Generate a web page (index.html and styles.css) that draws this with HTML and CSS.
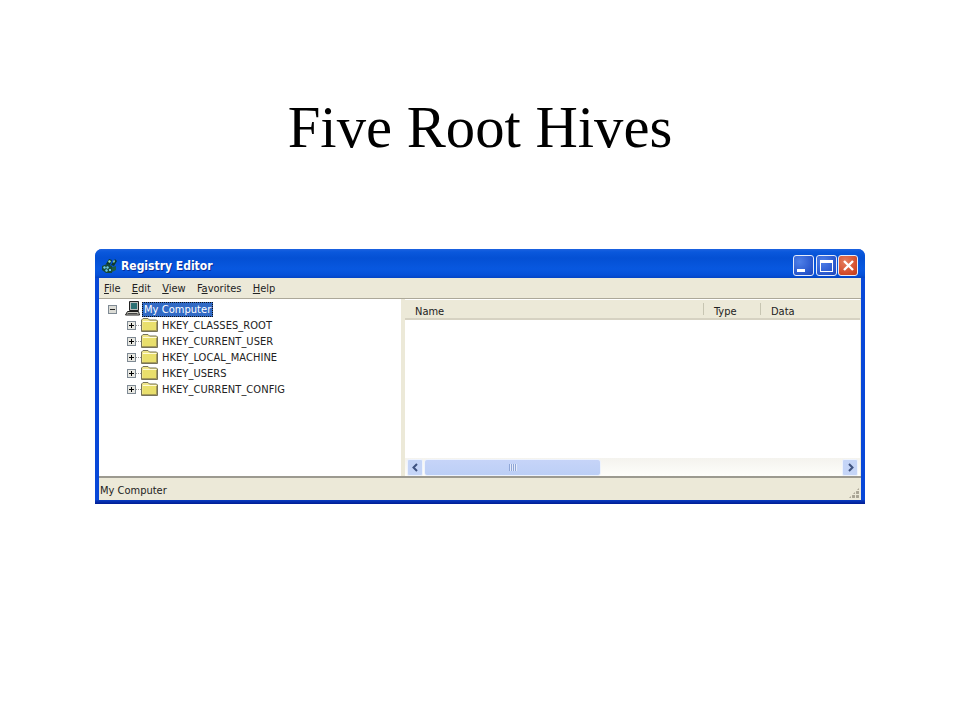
FILE: index.html
```html
<!DOCTYPE html>
<html lang="en">
<head>
<meta charset="utf-8">
<title>Five Root Hives</title>
<link rel="stylesheet" href="styles.css">
</head>
<body>
<svg class="defs" width="0" height="0" aria-hidden="true">
  <symbol id="folder" viewBox="0 0 17 14">
    <path d="M.5 13.500V2L2 .5h5L8.500 2h7l1 1v10.500z" fill="#efe58a" stroke="#77735a"/>
    <path d="M2 4h13v8H2z" fill="#e9df6c"/>
    <path d="M2 3.500h13" stroke="#fffbd8"/>
    <path d="M15.500 4v9M1 12.500h15" stroke="#a69c58"/>
  </symbol>
  <symbol id="plus" viewBox="0 0 9 9">
    <rect x=".5" y=".5" width="8" height="8" fill="#e8e8e2" stroke="#7f8a94"/>
    <path d="M2 4.500h5M4.500 2v5" stroke="#000"/>
  </symbol>
</svg>

<h1 class="slide-title">Five Root Hives</h1>

<div class="window">
  <header class="titlebar">
    <svg class="app-icon" width="17" height="17" viewBox="0 0 17 17">
      <path d="M1 9l5-2 5 2v7H5l-4-3z" fill="#174a38"/>
      <path d="M2 10l2-1 1 2-2 1zM6 9l2 1-1 2-2-1zM4 13l2-1 1 2-2 1zM8 12l2 0 0 2-2 0z" fill="#6fc6e0"/>
      <path d="M5 7l3-5 3 1-2 5zM10 8l4-6 2 2-3 5z" fill="#0f3a2a"/>
      <path d="M7 5l1-2 2 1-1 2zM12 5l1-2 1 1-1 2z" fill="#9fe0b8"/>
      <path d="M11 10l4-1v4l-4 2z" fill="#1f5c44"/>
    </svg>
    <span class="app-name">Registry Editor</span>
    <div class="controls">
      <button class="ctl" aria-label="Minimize"><span class="min-glyph"></span></button>
      <button class="ctl" aria-label="Maximize"><span class="max-glyph"></span></button>
      <button class="ctl close" aria-label="Close">
        <svg width="13" height="13" viewBox="0 0 13 13"><path d="M2 2l9 9M11 2l-9 9" stroke="#fff" stroke-width="2.400"/></svg>
      </button>
    </div>
  </header>

  <div class="inner">
    <nav class="menubar">
      <span><u>F</u>ile</span>
      <span><u>E</u>dit</span>
      <span><u>V</u>iew</span>
      <span>F<u>a</u>vorites</span>
      <span><u>H</u>elp</span>
    </nav>

    <div class="panes">
      <div class="tree">
        <div class="row root">
          <svg class="exp" width="9" height="9" viewBox="0 0 9 9">
            <rect x=".5" y=".5" width="8" height="8" fill="#dcdcd6" stroke="#7f8a94"/>
            <path d="M2 4.500h5" stroke="#222"/>
          </svg>
          <svg class="pc" width="17" height="16" viewBox="0 0 17 16">
            <path d="M5.500 .5h9v9h-9z" fill="#b8bcbc" stroke="#222"/>
            <path d="M7 2h6v6H7z" fill="#2a6f74"/>
            <path d="M3.500 10.500h11l1 3.500H1.500z" fill="#cfcfc6" stroke="#1c1c1c"/>
            <path d="M3.500 12.500h10" stroke="#444"/>
          </svg>
          <span class="label selected">My Computer</span>
        </div>
        <div class="row child"><svg class="exp" width="9" height="9"><use href="#plus"/></svg><i class="dots"></i><svg class="folder" width="17" height="14"><use href="#folder"/></svg><span class="label">HKEY_CLASSES_ROOT</span></div>
        <div class="row child"><svg class="exp" width="9" height="9"><use href="#plus"/></svg><i class="dots"></i><svg class="folder" width="17" height="14"><use href="#folder"/></svg><span class="label">HKEY_CURRENT_USER</span></div>
        <div class="row child"><svg class="exp" width="9" height="9"><use href="#plus"/></svg><i class="dots"></i><svg class="folder" width="17" height="14"><use href="#folder"/></svg><span class="label">HKEY_LOCAL_MACHINE</span></div>
        <div class="row child"><svg class="exp" width="9" height="9"><use href="#plus"/></svg><i class="dots"></i><svg class="folder" width="17" height="14"><use href="#folder"/></svg><span class="label">HKEY_USERS</span></div>
        <div class="row child"><svg class="exp" width="9" height="9"><use href="#plus"/></svg><i class="dots"></i><svg class="folder" width="17" height="14"><use href="#folder"/></svg><span class="label">HKEY_CURRENT_CONFIG</span></div>
      </div>

      <div class="list">
        <div class="list-head">
          <div class="col col-name">Name</div>
          <div class="col col-type">Type</div>
          <div class="col col-data">Data</div>
        </div>
        <div class="list-body"></div>
        <div class="hscroll">
          <div class="sb-btn"><svg width="9" height="9" viewBox="0 0 9 9"><path d="M6 1L2.500 4.500 6 8" fill="none" stroke="#3f5380" stroke-width="2"/></svg></div>
          <div class="sb-thumb"><span class="grip"></span></div>
          <div class="sb-track"></div>
          <div class="sb-btn"><svg width="9" height="9" viewBox="0 0 9 9"><path d="M3 1l3.500 3.500L3 8" fill="none" stroke="#3f5380" stroke-width="2"/></svg></div>
        </div>
      </div>
    </div>

    <footer class="statusbar">
      <span>My Computer</span>
      <span class="resize"></span>
    </footer>
  </div>
</div>
</body>
</html>
```
FILE: styles.css
```css
* { box-sizing: border-box; }
html, body { margin: 0; padding: 0; background: #fff; }
body { width: 960px; height: 720px; overflow: hidden; }
.defs { position: absolute; }

.slide-title {
  margin: 0;
  height: 249px;
  padding-top: 89px;
  text-align: center;
  font: 400 58.670px/78px "Liberation Serif", serif;
  color: #000;
}

.window {
  width: 770px;
  height: 255px;
  margin-left: 95px;
  display: flex;
  flex-direction: column;
  border-radius: 7px 7px 0 0;
  background: linear-gradient(#0848d8 0, #0848d8 calc(100% - 4px), #0a3cc0 calc(100% - 4px), #001c94 100%);
  font: 11px/13px "DejaVu Sans Condensed", "DejaVu Sans", sans-serif;
  color: #222;
  overflow: hidden;
}

.titlebar {
  height: 29px;
  flex: none;
  display: flex;
  align-items: center;
  padding: 4px 5px 0 6px;
  background: linear-gradient(#1c62e0 0, #0a58dc 3px, #0450d4 9px, #0858e0 20px, #0550d8 26px, #0444c4 100%);
}
.app-icon { flex: none; margin-top: -1px; }
.app-name {
  margin: 1px 0 0 3px;
  font: 700 12px/16px "DejaVu Sans Condensed", "DejaVu Sans", sans-serif;
  color: #fff;
  text-shadow: 1px 1px 0 #0a2f9a;
}
.controls { margin-left: auto; display: flex; gap: 2px; margin-right: 2px; }
.ctl {
  width: 21px;
  height: 21px;
  padding: 0;
  border: 1px solid #e6ecfa;
  border-radius: 3px;
  background: radial-gradient(circle at 30% 30%, #4f80e8, #2856cc 70%, #1f46b8);
  display: flex;
  align-items: center;
  justify-content: center;
}
.close {
  width: 20px;
  margin-left: -1px;
  background: radial-gradient(circle at 35% 30%, #e67f60, #d44e2c 65%, #bc3a1a);
}
.min-glyph { width: 8px; height: 3px; background: #fff; margin: 9px 5px 0 0; }
.max-glyph { width: 13px; height: 12px; border: 1px solid #fff; border-top-width: 3px; }

.inner {
  flex: 1;
  min-height: 0;
  margin: 0 4px 4px;
  display: flex;
  flex-direction: column;
  background: #ece9d8;
}

.menubar {
  height: 21px;
  flex: none;
  display: flex;
  align-items: center;
  gap: 11.250px;
  padding: 1px 0 0 5px;
  border-bottom: 1px solid #aca899;
}

.panes {
  flex: 1;
  min-height: 0;
  display: flex;
  gap: 4px;
  border-bottom: 2px solid #9c9a90;
}

.tree {
  width: 302px;
  flex: none;
  background: #fff;
  padding-top: 2px;
}
.row { height: 16px; display: flex; align-items: center; }
.root { padding-left: 9px; }
.root .pc { margin-left: 7px; flex: none; }
.child { padding-left: 28px; }
.dots { width: 5px; border-top: 1px dotted #999; }
.folder { flex: none; }
.exp { flex: none; }
.label { padding: 0 2px; margin-left: 2px; white-space: nowrap; letter-spacing: .05px; }
.selected {
  background: #316ac5;
  color: #fff;
  outline: 1px dotted #111;
  outline-offset: -1px;
  height: 15px;
  line-height: 15px;
  width: 71px;
  margin-left: 1px;
}

.list {
  flex: 1;
  min-width: 0;
  display: flex;
  flex-direction: column;
  background: #fff;
  margin-right: 1px;
}
.list-head {
  height: 21px;
  flex: none;
  display: flex;
  background: #ece9d8;
  border-bottom: 2px solid #d6d2c2;
  border-top: 1px solid #fff;
}
.col {
  padding: 5px 0 0 10px;
  position: relative;
}
.col::after {
  content: "";
  position: absolute;
  right: 0;
  top: 3px;
  bottom: 3px;
  width: 1px;
  background: #c7c5b2;
}
.col-name { width: 299px; }
.col-type { width: 57px; }
.col-data { flex: 1; }
.col-data::after { display: none; }
.list-body { flex: 1; }

.hscroll {
  height: 18px;
  flex: none;
  display: flex;
  padding: 1px 2px 0;
  background: linear-gradient(#f4f3ee, #fefefb);
}
.sb-btn {
  width: 16px;
  flex: none;
  display: flex;
  align-items: center;
  justify-content: center;
  background: #c5d5f7;
  border: 1px solid #eef3fd;
  border-radius: 2px;
}
.sb-thumb {
  width: 177px;
  margin-left: 1px;
  flex: none;
  display: flex;
  align-items: center;
  justify-content: center;
  background: linear-gradient(#c6d4f8, #bccff6);
  border: 1px solid #eef3fd;
  border-radius: 3px;
}
.grip {
  width: 8px;
  height: 7px;
  background: repeating-linear-gradient(90deg, #8fa6d6 0 1px, #e4ebfb 1px 2px);
}
.sb-track { flex: 1; }

.statusbar {
  height: 22px;
  flex: none;
  display: flex;
  align-items: center;
  justify-content: space-between;
  padding: 2px 0 0 1px;
}
.resize {
  width: 12px;
  height: 12px;
  margin: 6px 1px 0 0;
  background: radial-gradient(circle at 1.500px 1.500px, #a8a494 1.400px, transparent 1.600px) 0 0 / 4px 4px;
  clip-path: polygon(100% 0, 100% 100%, 0 100%);
}
```
